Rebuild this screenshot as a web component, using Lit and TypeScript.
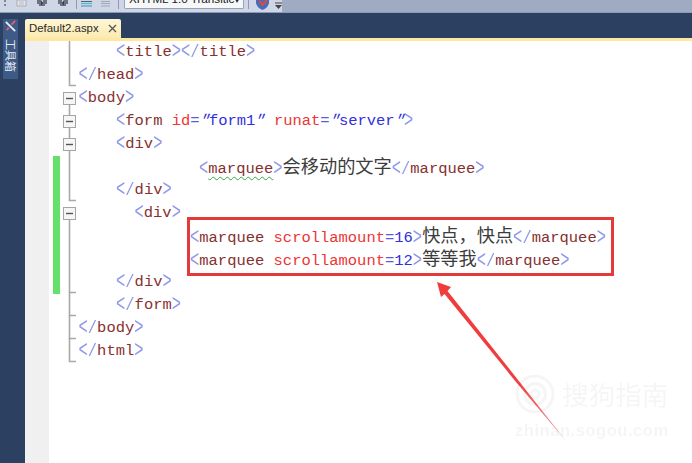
import { LitElement, html, css, svg } from "lit";
import { customElement } from "lit/decorators.js";

type Seg = [string, string];
type FoldKind = "box" | "boxtop" | "end" | "last" | "line" | "endgap";
interface Line { indent: number; segs: Seg[]; fold: FoldKind; green?: boolean }

const B: Seg = ["b", "<"], E: Seg = ["b", ">"], S: Seg = ["sl", "/"], Q: Seg = ["q", "\""];
const tag = (n: string): Seg => ["t", n];
const EQ: Seg = ["eq", "="];

const LINES: Line[] = [
  { indent: 67, segs: [B, tag("title"), E, B, S, tag("title"), E], fold: "line" },
  { indent: 29.5, segs: [B, S, tag("head"), E], fold: "endgap" },
  { indent: 29.5, segs: [B, tag("body"), E], fold: "box" },
  { indent: 67, segs: [B, tag("form"), ["a", " id"], EQ, Q, ["v", "form1"], Q, ["a", " runat"], EQ, Q, ["v", "server"], Q, E], fold: "boxtop" },
  { indent: 67, segs: [B, tag("div"), E], fold: "boxtop" },
  { indent: 150, segs: [B, ["s", "marquee"], E, ["z", "会移动的文字"], B, S, tag("marquee"), E], fold: "line", green: true },
  { indent: 67, segs: [B, S, tag("div"), E], fold: "endgap", green: true },
  { indent: 85.5, segs: [B, tag("div"), E], fold: "box", green: true },
  { indent: 141, segs: [B, tag("marquee"), ["a", " scrollamount"], EQ, ["v", "16"], E, ["z", "快点，快点"], B, S, tag("marquee"), E], fold: "line", green: true },
  { indent: 141, segs: [B, tag("marquee"), ["a", " scrollamount"], EQ, ["v", "12"], E, ["z", "等等我"], B, S, tag("marquee"), E], fold: "line", green: true },
  { indent: 67, segs: [B, S, tag("div"), E], fold: "end", green: true },
  { indent: 67, segs: [B, S, tag("form"), E], fold: "end" },
  { indent: 29.5, segs: [B, S, tag("body"), E], fold: "end" },
  { indent: 29.5, segs: [B, S, tag("html"), E], fold: "last" },
];

@customElement("app-root")
export class AppRoot extends LitElement {
  static styles = css`
    :host { display: block; position: relative; width: 692px; height: 463px; overflow: hidden; background: #2c4062; font-family: "Liberation Mono", monospace; }
    .toolbar { height: 13px; background: #9eabc3; overflow: hidden; box-sizing: border-box; border-bottom: 1px solid #8c9ab6; }
    .strip { width: 282px; height: 13px; background: #cfd6e6; display: flex; align-items: flex-start; padding-left: 4px; box-sizing: border-box; }
    .strip svg { flex: none; display: block; }
    .i1 { margin-left: 9px; }
    .i2 { margin-left: 9px; }
    .i3 { margin-left: 9px; }
    .i4 { margin-left: 7px; }
    .i5 { margin-left: 4px; }
    .i5b { margin-left: 8px; }
    .i7 { margin-left: 5px; }
    .i6 { margin-left: 6px; }
    .combo { margin-left: 5px; width: 120px; height: 9px; background: #f6f7f9; border: 1px solid #98a2b5; border-top: none; border-radius: 0 0 2px 2px; font: 11.7px/1 "Liberation Sans", sans-serif; color: #222; overflow: hidden; display: flex; justify-content: space-between; padding: 0 3px 0 4px; flex: none; box-sizing: border-box; }
    .combo span { margin-top: -7px; white-space: nowrap; }
    .main { display: flex; height: 450px; }
    .rail { width: 25px; flex: none; padding-left: 3px; box-sizing: border-box; }
    .railtab { width: 15px; height: 60px; margin-top: 6px; background: #3d5b86; display: flex; flex-direction: column; align-items: center; color: #e4eaf5; }
    .railtab svg { margin: 1px 0 6px; flex: none; }
    .railtext { writing-mode: vertical-rl; text-orientation: sideways; font: 11px/14px "Noto Sans CJK SC", sans-serif; }
    .doc { flex: 1; display: flex; flex-direction: column; min-width: 0; }
    .tabs { height: 25px; padding-top: 6px; box-sizing: border-box; flex: none; }
    .tab { width: 96px; height: 19px; background: linear-gradient(#fdf6d6, #fdeab0); border-radius: 2px 2px 0 0; display: flex; align-items: center; padding-left: 4px; box-sizing: border-box; color: #2a2a2a; font: 11.4px/19px "Liberation Sans", sans-serif; gap: 9px; }
    .goldline { height: 3px; background: #fce89f; flex: none; }
    .editor { flex: 1; display: grid; grid-template-columns: 24px 1fr; background: #fff; }
    .gutter { background: #f0f0f0; }
    .code { position: relative; }
    .row { height: 23px; display: flex; align-items: center; position: relative; white-space: pre; font-size: 15.47px; line-height: 23px; }
    .green { position: absolute; left: 4px; top: 0; bottom: 0; width: 7px; background: #66e06a; }
    .text { display: block; }
    .b, .sl { display: inline-block; color: #8f98ea; }
    .b { transform: scaleY(1.6); }
    .sl { transform: scaleY(1.15); }
    .q { display: inline-block; color: #2f2fe0; transform: skewX(-22deg); }
    .eq { color: #5a5ae0; }
    .t, .s { color: #873030; }
    .s { text-decoration: underline wavy #3aa63a 1.2px; text-underline-offset: 3px; }
    .a { color: #ee3434; }
    .v { color: #3030dc; }
    .z { color: #3c3c3c; font-family: "Noto Sans CJK SC", sans-serif; font-size: 18.2px; line-height: 23px; }
    .fold { position: absolute; left: 14px; top: 0; width: 14px; height: 23px; }
    .redbox { position: absolute; left: 138px; top: 176px; width: 427px; height: 59px; border: 3px solid #e53a3a; box-sizing: border-box; }
    .overlay { position: absolute; left: 0; top: 0; pointer-events: none; }
    .wm { position: absolute; left: 515px; top: 375px; color: #000; opacity: .035; filter: blur(.5px); display: grid; grid-template-columns: auto auto; pointer-events: none; }
    .wmname { font: 26.5px/38px "Noto Sans CJK SC", sans-serif; margin-left: 7px; white-space: nowrap; }
    .wmurl { grid-column: 1 / 3; font: bold 16.5px/18px "Liberation Sans", sans-serif; letter-spacing: .55px; padding-top: 8px; white-space: nowrap; }
  `;

  foldMark(kind: FoldKind) {
    const line = "#a9a9a9";
    const box = svg`<rect x=".5" y="5.5" width="12" height="12" fill="#f6f6f6" stroke="#a5a5a5"/><path d="M3 11.5H10" stroke="#555" stroke-width="1.4"/>`;
    if (kind === "box" || kind === "boxtop")
      return svg`<svg class="fold" viewBox="0 0 14 23"><path d="M6.5 ${kind === "boxtop" ? 0 : 5}V5M6.5 18V23" stroke=${line} stroke-width="1.6"/>${box}</svg>`;
    if (kind === "end" || kind === "endgap" || kind === "last") {
      const tail = kind === "end" ? "M6.5 21V23" : "";
      return svg`<svg class="fold" viewBox="0 0 14 23"><path d="M6.5 0V21.5H13" fill="none" stroke=${line} stroke-width="1.6"/><path d=${tail} stroke=${line} stroke-width="1.6"/></svg>`;
    }
    return svg`<svg class="fold" viewBox="0 0 14 23"><path d="M6.5 0V23" stroke=${line} stroke-width="1.6"/></svg>`;
  }

  render() {
    return html`
      <div class="toolbar">
        <div class="strip">
          <svg width="3" height="8" viewBox="0 0 3 8"><path d="M1 0V2M1 4V6" stroke="#7d8798" stroke-width="2"/></svg>
          <svg class="i1" width="11" height="7" viewBox="0 0 11 7"><path d="M1 0H10V6H1Z" fill="#e4e6ea" stroke="#a9adb6"/><path d="M3 2H8M3 4H8" stroke="#b9bcc4"/></svg>
          <svg class="i2" width="12" height="7" viewBox="0 0 12 7"><path d="M1 1H5M7 1H11M1 3H11M3 5H9" stroke="#4c5260" stroke-width="1.3"/><path d="M5 0L7 3L5 6" fill="#3a3f4a"/></svg>
          <svg class="i3" width="12" height="7" viewBox="0 0 12 7"><path d="M1 1H5M7 1H11M1 3H11M3 5H9" stroke="#4c5260" stroke-width="1.3"/><path d="M7 0L5 3L7 6" fill="#3a3f4a"/></svg>
          <svg class="i4" width="1" height="9" viewBox="0 0 1 9"><path d="M.5 0V9" stroke="#8f9ab0"/></svg>
          <svg class="i5" width="11" height="7" viewBox="0 0 11 7"><path d="M0 1.5H11" stroke="#59606e" stroke-width="1"/><path d="M0 3.5H11" stroke="#4cc0c8" stroke-width="1.3"/><path d="M0 6H11" stroke="#3f8fc8"/></svg>
          <svg class="i5b" width="11" height="7" viewBox="0 0 11 7"><path d="M1 1.5H10M1 3.5H10M1 6H10" stroke="#a2a7b1"/></svg>
          <svg class="i4" width="1" height="9" viewBox="0 0 1 9"><path d="M.5 0V9" stroke="#8f9ab0"/></svg>
          <div class="combo"><span>XHTML 1.0 Transitic</span><span>▾</span></div>
          <svg class="i5" width="1" height="9" viewBox="0 0 1 9"><path d="M.5 0V9" stroke="#8f9ab0"/></svg>
          <svg class="i6" width="15" height="10" viewBox="0 0 15 10"><path d="M1 0H14V3Q13 8 7.5 10Q2 8 1 3Z" fill="#4a6cb8"/><path d="M4 1L7.5 5L12 0" fill="none" stroke="#e2483c" stroke-width="2"/></svg>
          <svg class="i7" width="7" height="10" viewBox="0 0 7 10"><path d="M0 3H7" stroke="#444"/><path d="M0 5H7L3.5 9Z" fill="#444"/></svg>
        </div>
      </div>
      <div class="main">
        <div class="rail">
          <div class="railtab">
            <svg width="13" height="13" viewBox="0 0 14 14"><path d="M2 2L12 12" stroke="#e8eef8" stroke-width="2"/><path d="M12 1L8 5M5 8L3 11" stroke="#e0606e" stroke-width="2"/></svg>
            <span class="railtext">工具箱</span>
          </div>
        </div>
        <div class="doc">
          <div class="tabs">
            <div class="tab">
              <span>Default2.aspx</span>
              <svg width="9" height="9" viewBox="0 0 9 9"><path d="M1 1L8 8M8 1L1 8" stroke="#555" stroke-width="1.3"/></svg>
            </div>
          </div>
          <div class="goldline"></div>
          <div class="editor">
            <div class="gutter"></div>
            <div class="code">
              ${LINES.map((l) => html`
                <div class="row">
                  ${l.green ? html`<div class="green"></div>` : ""}
                  ${this.foldMark(l.fold)}
                  <span class="text" style="margin-left:${l.indent}px">${l.segs.map(([c, t]) => html`<span class=${c}>${t}</span>`)}</span>
                </div>`)}
              <div class="redbox"></div>
            </div>
          </div>
        </div>
      </div>
      <svg class="overlay" width="692" height="463" viewBox="0 0 692 463">
        <defs><linearGradient id="tail" x1="437" y1="282" x2="566" y2="441" gradientUnits="userSpaceOnUse"><stop offset=".6" stop-color="#f03c3c"/><stop offset="1" stop-color="#f4a0a0"/></linearGradient></defs>
        <path d="M437 282L451 287L447.5 291L522 385L566 441L516 382L444.5 294L441 297Z" fill="url(#tail)"/>
      </svg>
      <div class="wm">
        <svg width="40" height="38" viewBox="0 0 40 38" fill="none" stroke="#000" stroke-width="3"><circle cx="20" cy="19" r="18"/><circle cx="20" cy="19" r="10.5"/><circle cx="20" cy="19" r="4"/></svg>
        <div class="wmname">搜狗指南</div>
        <div class="wmurl">zhinan.sogou.com</div>
      </div>
    `;
  }
}
